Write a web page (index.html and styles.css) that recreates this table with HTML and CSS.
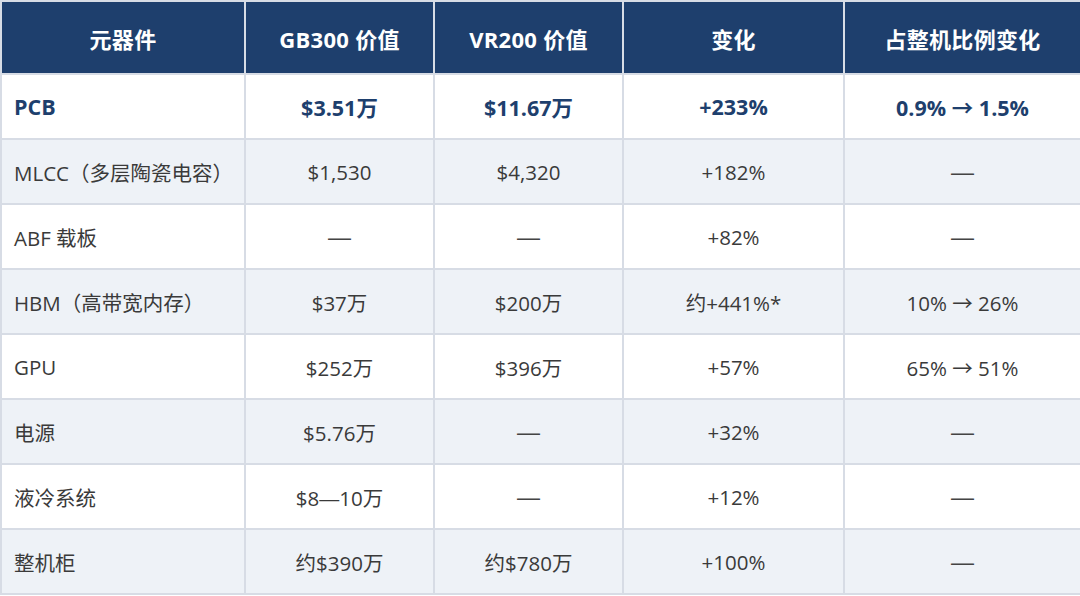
FILE: index.html
```html
<!DOCTYPE html>
<html lang="zh-CN">
<head>
<meta charset="utf-8">
<title>元器件价值对比</title>
<link rel="stylesheet" href="styles.css">
</head>
<body>
<table class="cmp">
  <colgroup>
    <col class="c1"><col class="c2"><col class="c3"><col class="c4"><col class="c5">
  </colgroup>
  <thead>
    <tr>
      <th>元器件</th>
      <th>GB300 价值</th>
      <th>VR200 价值</th>
      <th>变化</th>
      <th>占整机比例变化</th>
    </tr>
  </thead>
  <tbody>
    <tr class="hl">
      <td class="name">PCB</td><td>$3.51万</td><td>$11.67万</td><td>+233%</td><td>0.9% → 1.5%</td>
    </tr>
    <tr class="alt">
      <td class="name">MLCC（多层陶瓷电容）</td><td>$1,530</td><td>$4,320</td><td>+182%</td><td><span class="dash">—</span></td>
    </tr>
    <tr>
      <td class="name">ABF 载板</td><td><span class="dash">—</span></td><td><span class="dash">—</span></td><td>+82%</td><td><span class="dash">—</span></td>
    </tr>
    <tr class="alt">
      <td class="name">HBM（高带宽内存）</td><td>$37万</td><td>$200万</td><td>约+441%*</td><td>10% → 26%</td>
    </tr>
    <tr>
      <td class="name">GPU</td><td>$252万</td><td>$396万</td><td>+57%</td><td>65% → 51%</td>
    </tr>
    <tr class="alt">
      <td class="name">电源</td><td>$5.76万</td><td><span class="dash">—</span></td><td>+32%</td><td><span class="dash">—</span></td>
    </tr>
    <tr>
      <td class="name">液冷系统</td><td>$8<span class="idash">—</span>10万</td><td><span class="dash">—</span></td><td>+12%</td><td><span class="dash">—</span></td>
    </tr>
    <tr class="alt">
      <td class="name">整机柜</td><td>约$390万</td><td>约$780万</td><td>+100%</td><td><span class="dash">—</span></td>
    </tr>
  </tbody>
</table>
</body>
</html>
```
FILE: styles.css
```css
html, body {
  margin: 0;
  padding: 0;
  background: #ffffff;
}
.cmp {
  width: 1080px;
  border-collapse: collapse;
  table-layout: fixed;
  font-family: "Open Sans", "Noto Sans CJK SC", sans-serif;
  font-size: 20.5px;
  color: #3a3a3a;
}
.c1 { width: 244px; }
.c2 { width: 189px; }
.c3 { width: 189px; }
.c4 { width: 221px; }
.c5 { width: 237px; }
.cmp th, .cmp td {
  border: 2px solid #d7dce5;
  text-align: center;
  vertical-align: middle;
  padding: 0 6px;
  white-space: nowrap;
}
.cmp th {
  background: #1e3f6d;
  color: #ffffff;
  font-weight: 700;
  font-size: 22px;
  letter-spacing: 0.3px;
  height: 71px;
}
.cmp td {
  height: 63px;
}
.cmp td.name {
  text-align: left;
  padding-left: 12px;
}
.cmp tr.alt td {
  background: #eef2f7;
}
.cmp tr.hl td {
  color: #1e3f6d;
  font-weight: 700;
  font-size: 21.5px;
}
.dash {
  font-family: "Liberation Sans", sans-serif;
  font-size: 23px;
  font-weight: 400;
  color: #444444;
}
.idash {
  font-family: "Liberation Sans", sans-serif;
  font-size: 20px;
  font-weight: 400;
}
```
